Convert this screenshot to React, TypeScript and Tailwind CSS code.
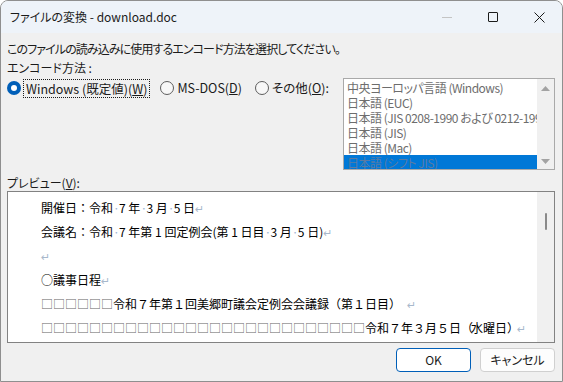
const jp = "font-['Noto_Sans_CJK_JP','Noto_Sans_CJK_SC',sans-serif]";

const Dot = () => <span className="inline-block w-[6px] text-center text-[#9bb4d4]">·</span>;
const Ret = () => <span className="text-[11px] text-[#a8b8cc] font-['DejaVu_Sans',sans-serif]">↵</span>;
const Boxes = ({ n }: { n: number }) => (
  <span className="text-[#666666]">{"□".repeat(n)}</span>
);

const Radio = ({ checked }: { checked?: boolean }) =>
  checked ? (
    <span className="flex h-[14px] w-[14px] shrink-0 items-center justify-center rounded-full bg-[#005fb8]">
      <span className="h-[6px] w-[6px] rounded-full bg-white" />
    </span>
  ) : (
    <span className="block h-[14px] w-[14px] shrink-0 rounded-full border border-[#5d5d5d] bg-[#f7f7f7]" />
  );

const encodings = [
  "中央ヨーロッパ言語 (Windows)",
  "日本語 (EUC)",
  "日本語 (JIS 0208-1990 および 0212-1990)",
  "日本語 (JIS)",
  "日本語 (Mac)",
  "日本語 (シフト JIS)",
];

export default function App() {
  return (
    <div className={`w-[563px] h-[382px] flex flex-col overflow-hidden rounded-t-[8px] border border-[#8f8f8f] bg-[#f0f0f0] text-[#1b1b1b] ${jp}`}>
      {/* title bar */}
      <div className="flex h-[32px] shrink-0 items-center bg-[#eef3f9]">
        <span className="pl-[9px] text-[12px] [font-feature-settings:'palt']">ファイルの変換 - download.doc</span>
        <div className="ml-auto flex h-full">
          <div className="flex w-[46px] items-center justify-center">
            <span className="h-px w-[10px] bg-[#c4c4c4]" />
          </div>
          <div className="flex w-[46px] items-center justify-center">
            <span className="h-[10px] w-[10px] rounded-[1px] border border-[#1b1b1b]" />
          </div>
          <div className="flex w-[46px] items-center justify-center">
            <svg width="11" height="11" viewBox="0 0 11 11">
              <path d="M0.5 0.5 L10.5 10.5 M10.5 0.5 L0.5 10.5" stroke="#1b1b1b" strokeWidth="1" />
            </svg>
          </div>
        </div>
      </div>

      {/* body */}
      <div className="flex flex-1 flex-col px-[6px] pt-[8px] text-[12px] [font-feature-settings:'palt']">
        <div className="h-[16px] leading-[16px] tracking-[-0.9px]">このファイルの読み込みに使用するエンコード方法を選択してください。</div>
        <div className="mt-[3px] h-[16px] leading-[16px]">エンコード方法 :</div>

        <div className="mt-[2px] flex">
          <div className="flex h-[20px] items-center text-[12.5px]">
            <Radio checked />
            <span className="ml-[2px] border border-dotted border-[#1b1b1b] px-[2px] leading-[17px]">
              Windows (既定値)(<span className="underline">W</span>)
            </span>
            <span className="ml-[10px]"><Radio /></span>
            <span className="ml-[3px]">MS-DOS(<span className="underline">D</span>)</span>
            <span className="ml-[13px]"><Radio /></span>
            <span className="ml-[3px]">その他(<span className="underline">O</span>):</span>
          </div>

          <div className="ml-auto mr-[1px] flex h-[92px] w-[212px] border border-[#a9a9a9] bg-white">
            <div className="flex-1 overflow-hidden pt-[1px]">
              {encodings.map((e, i) => (
                <div
                  key={e}
                  className={`h-[15px] whitespace-nowrap pl-[3px] leading-[15px] tracking-[-0.5px] ${
                    i === 5 ? "bg-[#0078d7] text-[#5a7ba3]" : "text-[#6d6d6d]"
                  }`}
                >
                  {e}
                </div>
              ))}
            </div>
            <div className="flex w-[17px] flex-col items-center justify-between bg-[#f0f0f0] pb-[5px] pt-[7px]">
              <svg width="9" height="5" viewBox="0 0 9 5"><path d="M0 5 L4.5 0 L9 5 Z" fill="#a3a3a3" /></svg>
              <svg width="9" height="5" viewBox="0 0 9 5"><path d="M0 0 L4.5 5 L9 0 Z" fill="#a3a3a3" /></svg>
            </div>
          </div>
        </div>

        <div className="mt-[5px] h-[16px] leading-[16px]">
          プレビュー(<span className="underline">V</span>):
        </div>

        {/* preview */}
        <div className="mr-[1px] flex h-[152px] border border-[#828282] bg-white text-[12px] text-black [font-feature-settings:normal]">
          <div className="flex-1 overflow-hidden whitespace-nowrap pl-[33px] pt-[4px]">
            <div className="h-[24px] leading-[24px]">開催日：令和<Dot />7 年<Dot />3 月<Dot />5 日<Ret /></div>
            <div className="h-[24px] leading-[24px]">会議名：令和<Dot />7 年第 1 回定例会(第 1 日目<Dot />3 月<Dot />5 日)<Ret /></div>
            <div className="h-[24px] leading-[24px]"><Ret /></div>
            <div className="h-[24px] leading-[24px]">○議事日程<Ret /></div>
            <div className="h-[24px] leading-[24px]"><Boxes n={6} />令和７年第１回美郷町議会定例会会議録（第１日目）<span className="inline-block w-[6px]" /><Ret /></div>
            <div className="h-[24px] leading-[24px]"><Boxes n={27} />令和７年３月５日<span className="tracking-[-2px]">（</span>水曜日<span className="tracking-[-2px]">）</span><Ret /></div>
          </div>
          <div className="flex w-[17px] justify-center bg-[#f0f0f0] pt-[21px]">
            <span className="h-[17px] w-[2px] rounded-full bg-[#8a8a8a]" />
          </div>
        </div>

        {/* buttons */}
        <div className="mt-[5px] flex justify-end gap-[9px] pr-[1px] text-[12px]">
          <button className="h-[24px] w-[75px] rounded-[4px] border border-[#005fb8] bg-white">OK</button>
          <button className="h-[24px] w-[75px] rounded-[4px] border border-[#d0d0d0] bg-[#fdfdfd]">キャンセル</button>
        </div>
      </div>
    </div>
  );
}
